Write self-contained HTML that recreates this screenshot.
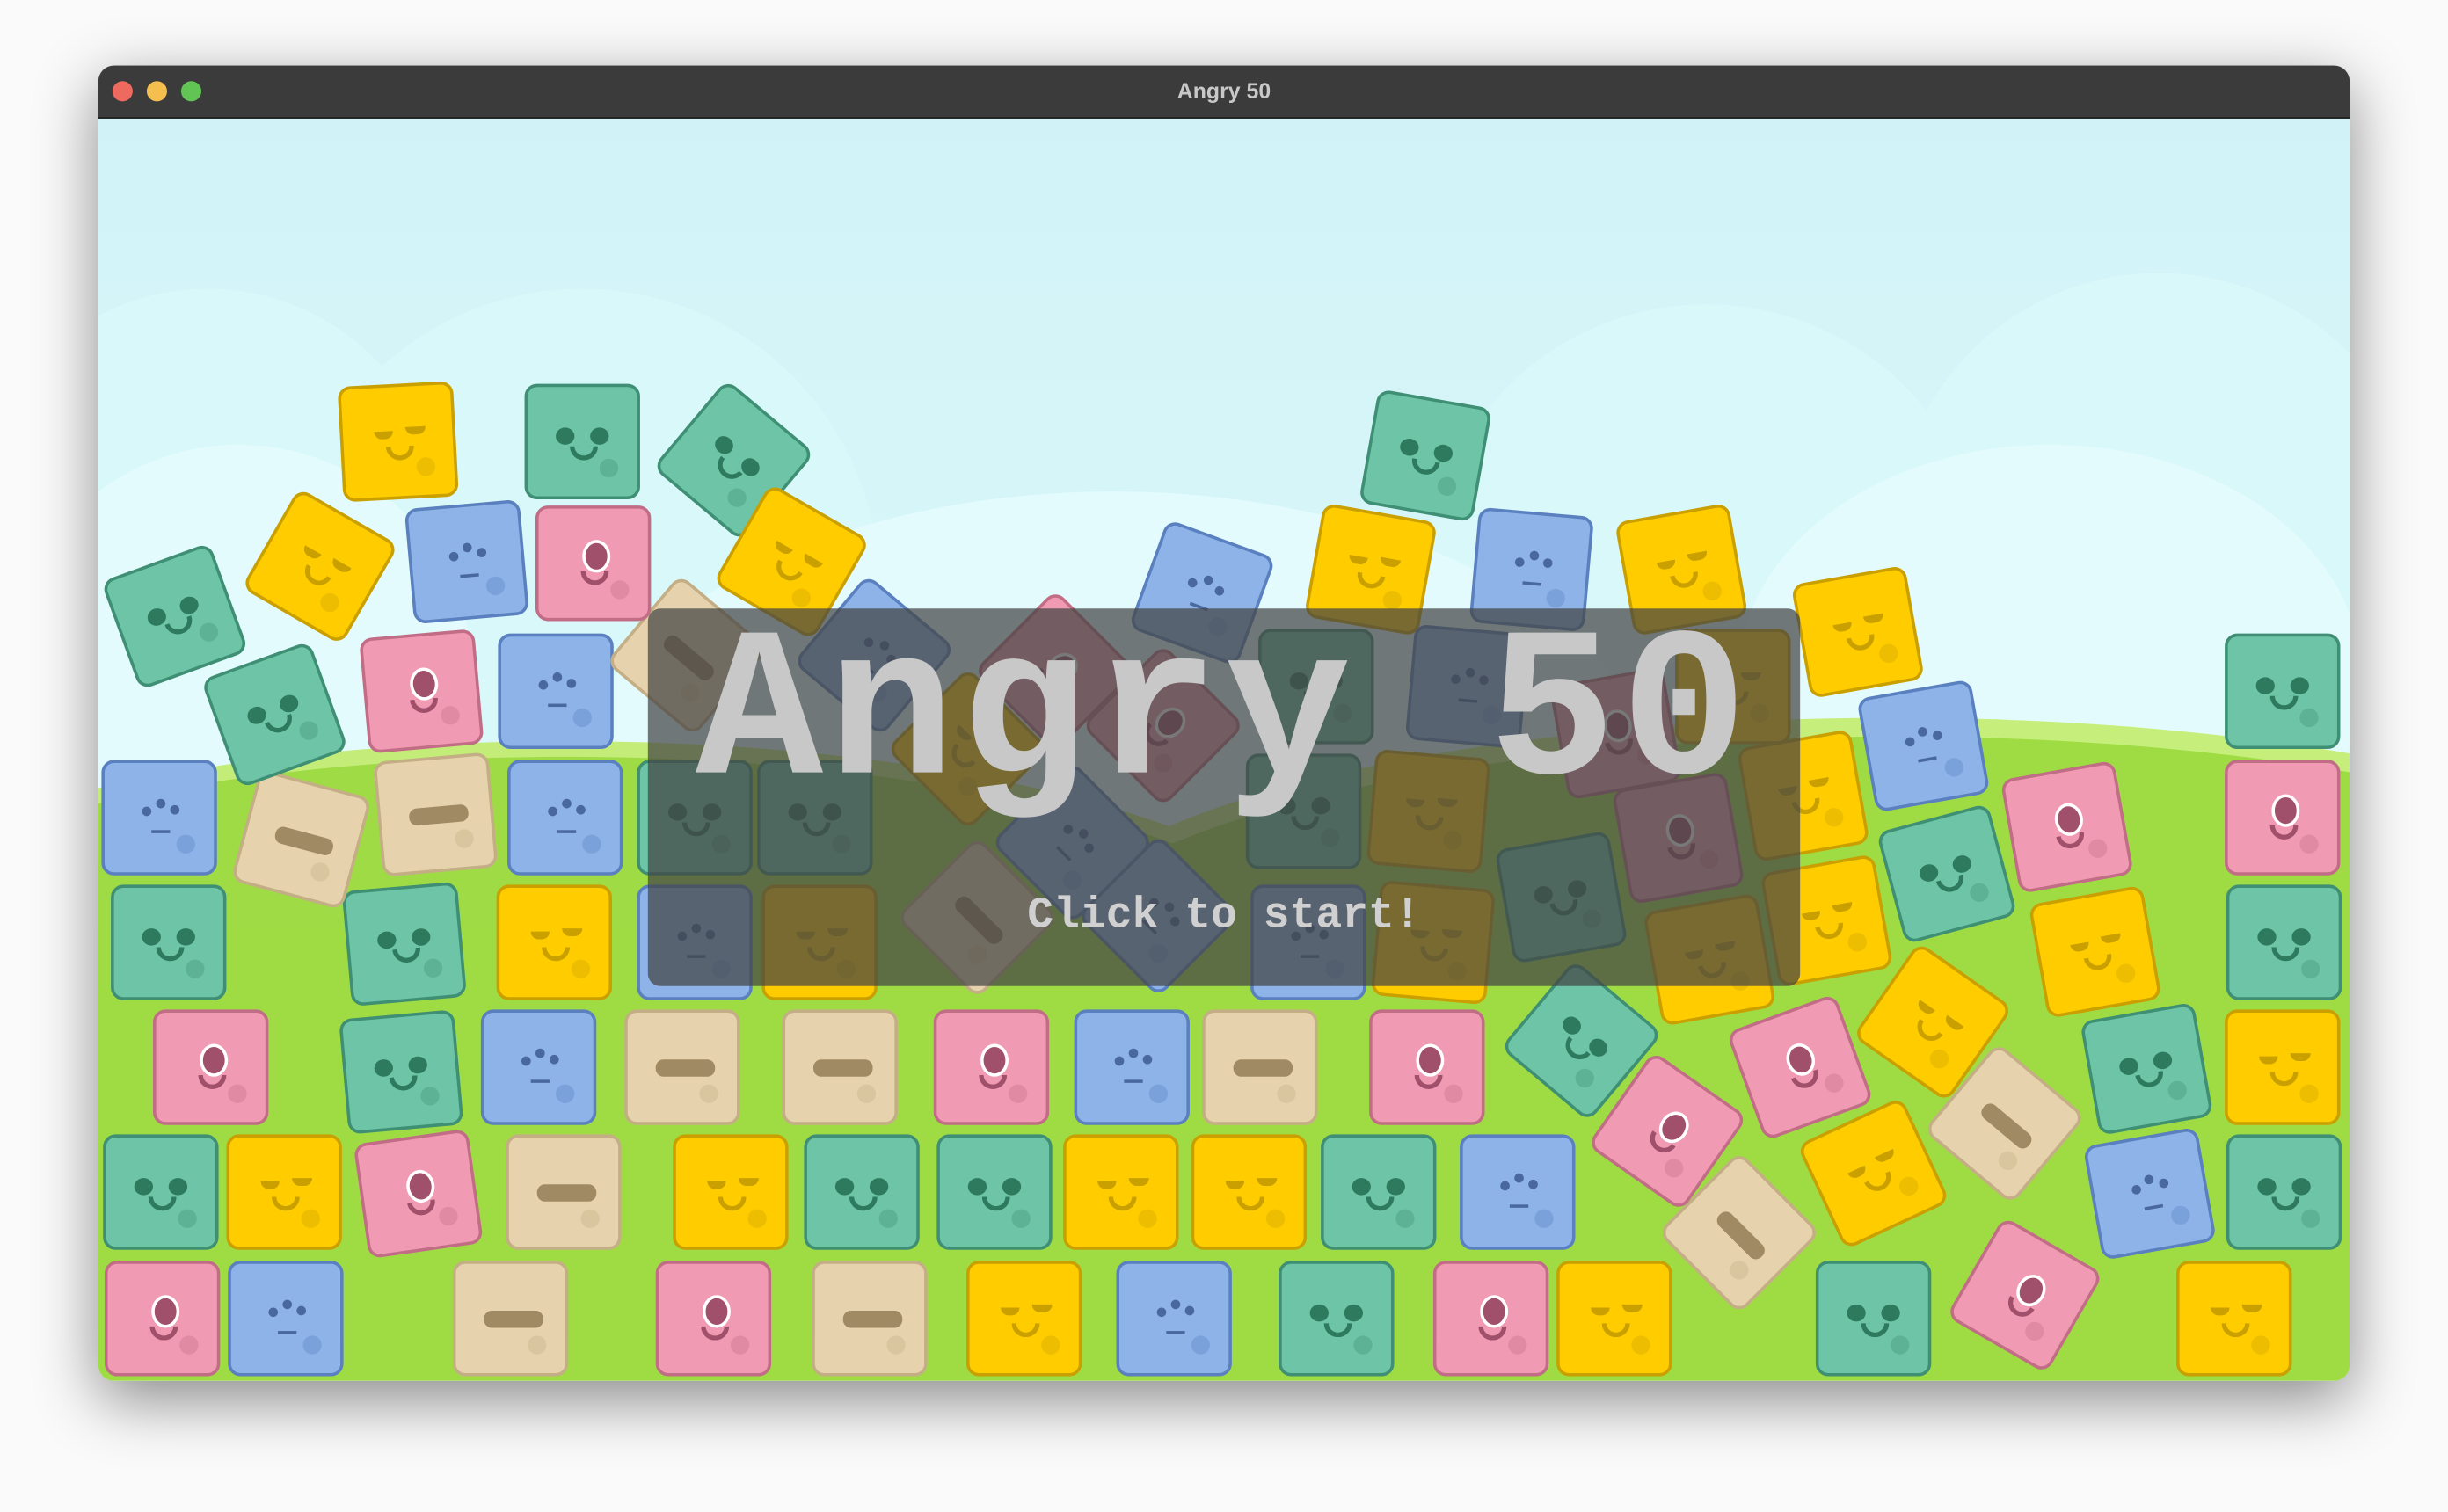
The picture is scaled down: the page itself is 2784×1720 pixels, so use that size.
<!DOCTYPE html>
<html><head><meta charset="utf-8"><style>
html,body{margin:0;padding:0;width:2784px;height:1720px;overflow:hidden;background:#fafafa;}
#s{position:absolute;left:0;top:0;width:1568px;height:969px;transform:scale(1.7755,1.775);transform-origin:0 0;}
#win{position:absolute;left:63px;top:42px;width:1442px;height:843px;border-radius:10px;overflow:hidden;box-shadow:0 12px 40px rgba(0,0,0,.45);background:#d3f3f7;}
#tb{position:absolute;left:0;top:0;width:100%;height:33px;background:#3b3b3b;border-bottom:1px solid #222;z-index:5;}
#tb .d{position:absolute;top:10px;width:13px;height:13px;border-radius:50%;}
#tb .t{position:absolute;left:0;right:0;top:8px;text-align:center;color:#c8c8c8;font:bold 14px "Liberation Sans",sans-serif;}
#game{position:absolute;left:0;top:33px;width:1442px;height:810px;overflow:hidden;background:linear-gradient(#d1f3f7 0%,#d8f6f9 40%,#e3fbfd 55%);}
.cl{position:absolute;border-radius:50%;background:#d9f8fa;}
.cl2{position:absolute;border-radius:50%;background:#e3fbfd;}
.b{position:absolute;width:74px;height:74px;border-radius:8px;box-sizing:border-box;border:2px solid;}
.e{position:absolute;width:12px;height:11px;border-radius:50%;top:26px;}
.m{position:absolute;left:27px;top:38px;width:18px;height:9px;border:3px solid;border-top:none;border-radius:0 0 12px 12px;box-sizing:border-box;}
.sp{position:absolute;right:12px;bottom:12px;width:12px;height:12px;border-radius:50%;opacity:.35;}
#ov{position:absolute;left:352px;top:315px;width:738px;height:242px;border-radius:8px;background:rgba(68,68,68,.72);z-index:3;}
#t1{position:absolute;left:0;width:100%;top:-8px;text-align:center;font:bold 136px "Liberation Mono",monospace;color:#c8c8c8;letter-spacing:3px;}
#t2{position:absolute;left:0;width:100%;top:182px;text-align:center;font:bold 28px "Liberation Mono",monospace;color:#d0d0d0;}
</style></head><body>
<div id="s"><div id="win">
<div id="tb"><div class="d" style="left:9px;background:#ee6a5e"></div><div class="d" style="left:31px;background:#f5bf4f"></div><div class="d" style="left:53px;background:#61c454"></div><div class="t">Angry 50</div></div>
<div id="game">
<div class="cl" style="left:-80px;top:110px;width:300px;height:300px"></div>
<div class="cl" style="left:120px;top:110px;width:380px;height:380px"></div>
<div class="cl" style="left:850px;top:120px;width:360px;height:360px"></div>
<div class="cl" style="left:1150px;top:100px;width:340px;height:340px"></div>
<div class="cl2" style="left:-60px;top:210px;width:300px;height:300px"></div>
<div class="cl2" style="left:300px;top:240px;width:700px;height:400px"></div>
<div class="cl2" style="left:1050px;top:210px;width:400px;height:300px"></div>
<div style="position:absolute;left:-200px;top:400px;width:1000px;height:300px;border-radius:50%;background:#c3ec78"></div>
<div style="position:absolute;left:600px;top:385px;width:1100px;height:300px;border-radius:50%;background:#c5ef7a"></div>
<div style="position:absolute;left:-200px;top:410px;width:1000px;height:300px;border-radius:50%;background:#9fdb44"></div>
<div style="position:absolute;left:600px;top:397px;width:1100px;height:300px;border-radius:50%;background:#9fdc44"></div>
<div style="position:absolute;left:0;top:520px;width:1442px;height:290px;background:#9fdc44"></div>
<div id="blocks"></div>
<div id="ov"><div id="t1">Angry 50</div><div id="t2">Click to start!</div></div>
</div></div></div>
<script>
var C={y:['#ffcc00','#c9a000','#c9a000'],t:['#6dc4a6','#3f8f74','#2e7a5f'],b:['#8db3e8','#5a80bf','#4a68a0'],p:['#f09ab3','#c26d86','#a0506a'],n:['#e6d3ad','#c4ae85','#a08a64']};
var L=[
[104,845,'p',0],[183,845,'b',0],[327,845,'n',0],[457,845,'p',0],[557,845,'n',0],[656,845,'y',0],[752,845,'b',0],[856,845,'t',0],[955,845,'p',0],[1034,845,'y',0],[1200,845,'t',0],[1297,830,'p',30],[1431,845,'y',0],
[103,764,'t',0],[182,764,'y',0],[268,765,'p',-8],[361,764,'n',0],[468,764,'y',0],[552,764,'t',0],[637,764,'t',0],[718,764,'y',0],[800,764,'y',0],[883,764,'t',0],[972,764,'b',0],[1114,790,'n',45],[1200,752,'y',-25],[1377,765,'b',-10],[1463,764,'t',0],
[135,684,'p',0],[257,687,'t',-5],[345,684,'b',0],[437,684,'n',0],[538,684,'n',0],[635,684,'p',0],[725,684,'b',0],[807,684,'n',0],[914,684,'p',0],[1013,667,'t',40],[1068,725,'p',35],[1153,684,'p',-20],[1238,655,'y',35],[1284,720,'n',40],[1375,685,'t',-10],[1462,684,'y',0],
[108,604,'t',0],[259,605,'t',-5],[355,604,'y',0],[445,604,'b',0],[525,604,'y',0],[626,588,'n',45],[742,587,'b',45],[838,604,'b',0],[918,604,'y',5],[1095,615,'y',-10],[1170,590,'y',-10],[1342,610,'y',-10],[1463,604,'t',0],
[102,524,'b',0],[193,538,'n',15],[279,522,'n',-5],[362,524,'b',0],[445,524,'t',0],[522,524,'t',0],[687,540,'b',45],[835,520,'t',0],[915,520,'y',5],[1000,575,'t',-10],[1075,537,'p',-10],[1155,510,'y',-10],[1247,560,'t',-15],[1324,530,'p',-10],[1462,524,'p',0],
[176,458,'t',-20],[270,443,'p',-5],[356,443,'b',0],[440,420,'n',40],[560,420,'b',40],[676,430,'p',45],[620,480,'y',45],[745,465,'p',45],[843,440,'t',0],[940,440,'b',5],[1035,470,'p',-10],[1110,440,'y',0],[1190,405,'y',-10],[1232,478,'b',-10],[1462,443,'t',0],
[112,395,'t',-20],[205,363,'y',30],[299,360,'b',-5],[380,361,'p',0],[255,283,'y',-3],[373,283,'t',0],[470,295,'t',40],[507,360,'y',30],[770,380,'b',20],[913,292,'t',10],[878,365,'y',10],[981,365,'b',5],[1077,365,'y',-10]
];
var h='';
L.forEach(function(a){var c=C[a[2]];var x=a[0]-63-37,y=a[1]-75-37;
var f='';
if(a[2]=='p'){f='<div style="position:absolute;left:28px;top:20px;width:14px;height:17px;border-radius:50%;background:'+c[2]+';border:2px solid #fff"></div><div class="m" style="border-color:'+c[2]+';top:40px"></div>';}
else if(a[2]=='n'){f='<div style="position:absolute;left:18px;top:30px;width:38px;height:11px;border-radius:5px;background:'+c[2]+'"></div>';}
else if(a[2]=='b'){f='<div style="position:absolute;left:24px;top:28px;width:6px;height:6px;border-radius:50%;background:'+c[2]+'"></div><div style="position:absolute;left:33px;top:23px;width:6px;height:6px;border-radius:50%;background:'+c[2]+'"></div><div style="position:absolute;left:42px;top:27px;width:6px;height:6px;border-radius:50%;background:'+c[2]+'"></div><div style="position:absolute;left:30px;top:43px;width:12px;height:2px;background:'+c[2]+'"></div>';}
else if(a[2]=='y'){f='<div style="position:absolute;left:20px;top:28px;width:12px;height:5px;background:'+c[2]+';border-radius:0 0 6px 6px"></div><div style="position:absolute;left:40px;top:26px;width:13px;height:5px;background:'+c[2]+';border-radius:0 0 6px 6px"></div><div class="m" style="border-color:'+c[2]+'"></div>';}
else{f='<div class="e" style="left:18px;background:'+c[2]+'"></div><div class="e" style="left:40px;background:'+c[2]+'"></div><div class="m" style="border-color:'+c[2]+'"></div>';}
h+='<div class="b" style="left:'+x+'px;top:'+y+'px;background:'+c[0]+';border-color:'+c[1]+';transform:rotate('+a[3]+'deg)">'+f+'<div class="sp" style="background:'+c[1]+'"></div></div>';});
document.getElementById('blocks').innerHTML=h;
</script>
</body></html>
